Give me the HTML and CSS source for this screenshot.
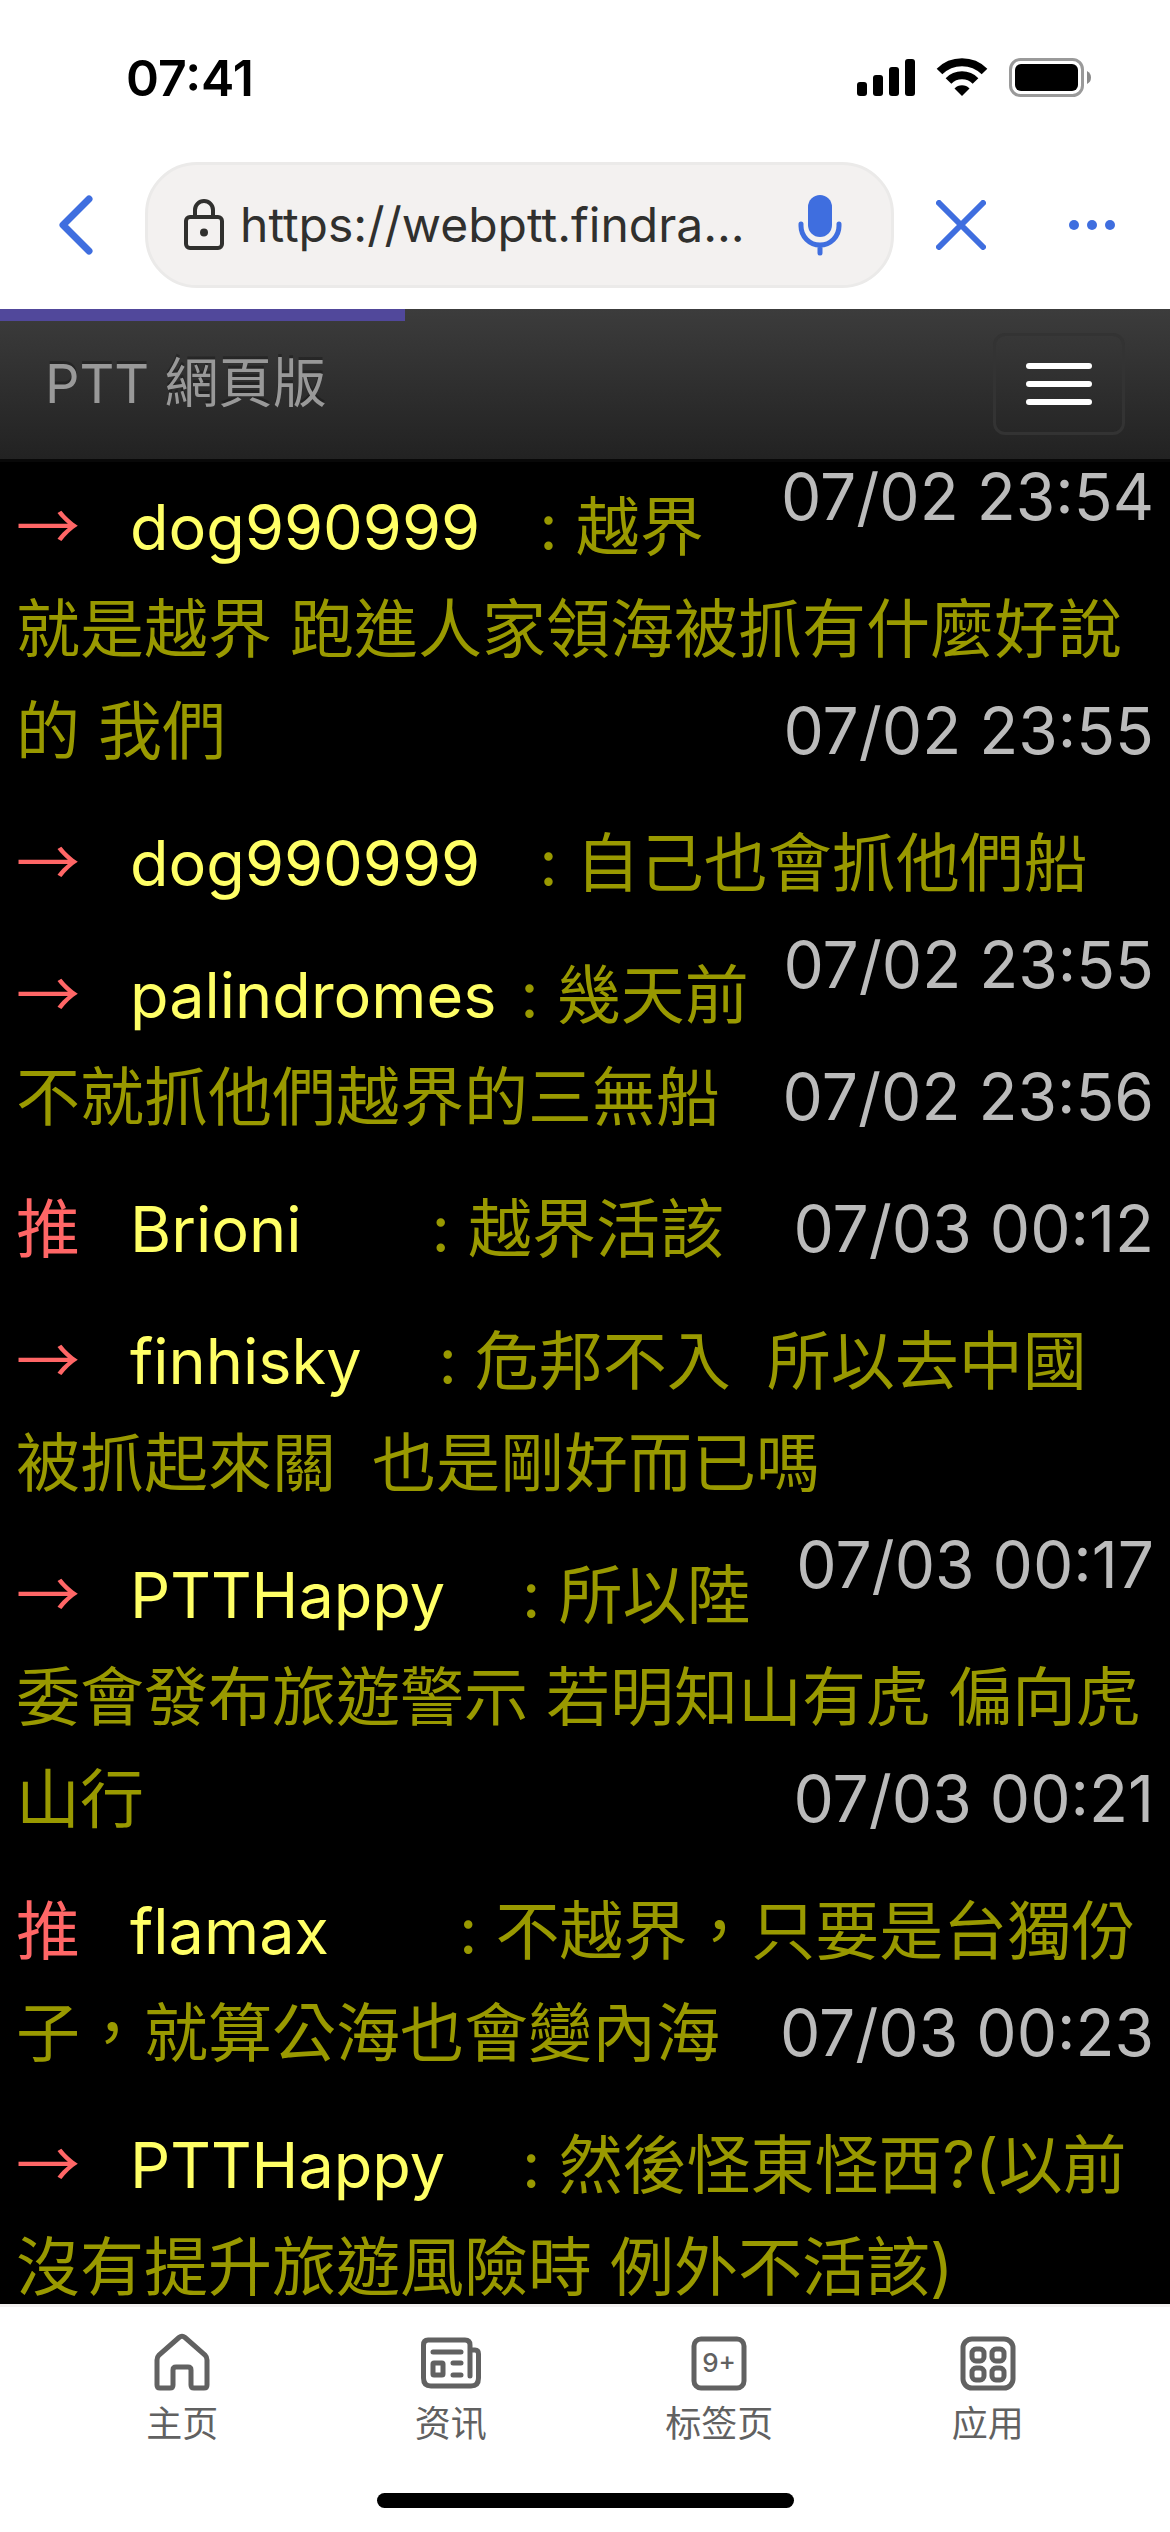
FILE: index.html
```html
<!DOCTYPE html>
<html lang="zh-Hant">
<head>
<meta charset="utf-8">
<meta name="viewport" content="width=device-width, initial-scale=1">
<title>PTT 網頁版</title>
<link rel="stylesheet" href="styles.css">
</head>
<body>
<header class="status">
  <time class="clock">07:41</time>
  <div class="status-icons">
    <svg width="60" height="40" viewBox="0 0 60 40" aria-hidden="true"><rect x="1" y="24" width="10" height="14" rx="3"/><rect x="17" y="17" width="10" height="21" rx="3"/><rect x="33" y="9" width="10" height="29" rx="3"/><rect x="49" y="1" width="10" height="37" rx="3"/></svg>
    <svg width="52" height="40" viewBox="0 0 52 40" aria-hidden="true"><g fill="none" stroke="#000" stroke-width="8"><path d="M3.500 13.500 A32 32 0 0 1 48.500 13.500"/><path d="M12.500 23 A19 19 0 0 1 39.500 23"/></g><path d="M18.500 30.500 A10.500 10.500 0 0 1 33.500 30.500 L26 38 Z"/></svg>
    <svg width="84" height="40" viewBox="0 0 84 40" aria-hidden="true"><rect x="2.500" y="1.500" width="72" height="36" rx="10" fill="none" stroke="#9a9a9a" stroke-width="3"/><rect x="7" y="6" width="63" height="27" rx="6"/><path d="M79 13 Q83 15 83 19.500 Q83 24 79 26 Z" fill="#8a8a8a"/></svg>
  </div>
</header>

<form class="toolbar">
  <button class="tool back" type="button" aria-label="返回"><svg width="36" height="60" viewBox="0 0 36 60"><path d="M31 4 L5 30 L31 56"/></svg></button>
  <div class="address">
    <svg class="lock" width="42" height="52" viewBox="0 0 42 52" aria-hidden="true"><rect x="3" y="18" width="36" height="31" rx="4"/><path d="M12 18 V11 A9 9 0 0 1 30 11 V18"/><circle cx="21" cy="33.500" r="2"/></svg>
    <input class="url" type="text" aria-label="网址" value="https://webptt.findra..." readonly>
    <button class="tool" type="button" aria-label="语音"><svg width="44" height="62" viewBox="0 0 44 62"><rect class="solid" x="10" y="1" width="24" height="42" rx="12"/><path class="thin" d="M3 30 V32 A19 19 0 0 0 41 32 V30 M22 51 V59"/></svg></button>
  </div>
  <button class="tool stop" type="button" aria-label="停止"><svg width="50" height="50" viewBox="0 0 50 50"><path class="mid" d="M3 3 L47 47 M47 3 L3 47"/></svg></button>
  <button class="tool more" type="button" aria-label="更多"><svg width="48" height="12" viewBox="0 0 48 12"><g class="solid"><circle cx="6" cy="6" r="5"/><circle cx="24" cy="6" r="5"/><circle cx="42" cy="6" r="5"/></g></svg></button>
</form>

<nav class="navbar">
  <div class="progress"></div>
  <a class="brand" href="#">PTT 網頁版</a>
  <button class="toggle" type="button" aria-label="選單"><span></span><span></span><span></span></button>
</nav>

<main class="page">
  <ol class="thread">
    <li><time class="date">07/02 23:54</time></li>
    <li class="push"><span class="tag">→</span><span class="user">dog990999&nbsp;&nbsp;&nbsp;</span>: 越界<br>就是越界 跑進人家領海被抓有什麼好說<br>的 我們<time class="date">07/02 23:55</time></li>
    <li class="push"><span class="tag">→</span><span class="user">dog990999&nbsp;&nbsp;&nbsp;</span>: 自己也會抓他們船<time class="date">07/02 23:55</time></li>
    <li class="push"><span class="tag">→</span><span class="user">palindromes&nbsp;</span>: 幾天前<br>不就抓他們越界的三無船<time class="date">07/02 23:56</time></li>
    <li class="push"><span class="tag">推</span><span class="user">Brioni&nbsp;&nbsp;&nbsp;&nbsp;&nbsp;&nbsp;&nbsp;</span>: 越界活該<time class="date">07/03 00:12</time></li>
    <li class="push"><span class="tag">→</span><span class="user">finhisky&nbsp;&nbsp;&nbsp;&nbsp;</span>: 危邦不入&nbsp; 所以去中國<br>被抓起來關&nbsp; 也是剛好而已嗎<time class="date">07/03 00:17</time></li>
    <li class="push"><span class="tag">→</span><span class="user">PTTHappy&nbsp;&nbsp;&nbsp;&nbsp;</span>: 所以陸<br>委會發布旅遊警示 若明知山有虎 偏向虎<br>山行<time class="date">07/03 00:21</time></li>
    <li class="push"><span class="tag">推</span><span class="user">flamax&nbsp;&nbsp;&nbsp;&nbsp;&nbsp;&nbsp;&nbsp;</span>: 不越界，只要是台獨份<br>子，就算公海也會變內海<time class="date">07/03 00:23</time></li>
    <li class="push"><span class="tag">→</span><span class="user">PTTHappy&nbsp;&nbsp;&nbsp;&nbsp;</span>: 然後怪東怪西?(以前<br>沒有提升旅遊風險時 例外不活該)</li>
  </ol>
</main>

<footer class="dock" lang="zh-Hans">
  <nav class="tabs">
    <a class="tab" href="#"><svg width="60" height="60" viewBox="0 0 60 60"><path d="M27 5.500 Q30 3 33 5.500 L53 23 Q55 25 55 28 V53 Q55 56 52 56 H42 Q39 56 39 53 V38 Q39 35 36 35 H24 Q21 35 21 38 V53 Q21 56 18 56 H8 Q5 56 5 53 V28 Q5 25 7 23 Z"/></svg>主页</a>
    <a class="tab" href="#"><svg width="60" height="60" viewBox="0 0 60 60"><path d="M49 44 V13 Q49 8 44 8 H7 Q2.500 8 2.500 13 V46 Q2.500 54 10 54 H50 Q57.500 54 57.500 46 V22 Q57.500 18 54 18 H50 M12 20 H40 M32 31 H40 M32 43 H40"/><rect x="12" y="31" width="10" height="12" rx="1"/></svg>资讯</a>
    <a class="tab" href="#"><svg width="60" height="60" viewBox="0 0 60 60"><rect x="5" y="7" width="50" height="49" rx="7"/><text class="count" x="30" y="40" text-anchor="middle">9+</text></svg>标签页</a>
    <a class="tab" href="#"><svg width="60" height="60" viewBox="0 0 60 60"><rect x="5" y="7" width="50" height="49" rx="9"/><rect x="14" y="17" width="12" height="12" rx="4"/><rect x="34" y="17" width="12" height="12" rx="4"/><rect x="14" y="36" width="12" height="12" rx="4"/><rect x="34" y="36" width="12" height="12" rx="4"/></svg>应用</a>
  </nav>
  <div class="home-bar"></div>
</footer>
</body>
</html>
```
FILE: styles.css
```css
* { box-sizing: border-box; }

body {
  margin: 0;
  height: 100vh;
  display: flex;
  flex-direction: column;
  background: #fff;
  font-family: Inter, "Noto Sans CJK TC", sans-serif;
}

button {
  margin: 0;
  padding: 0;
  border: 0;
  background: none;
}

svg { display: block; }

/* Status bar */
.status {
  flex: none;
  display: flex;
  align-items: center;
  justify-content: space-between;
  height: 162px;
  padding: 0 78px 6px 126px;
}

.clock {
  font-size: 50px;
  font-weight: 600;
}

.status-icons {
  display: flex;
  gap: 20px;
}

/* Browser toolbar */
.toolbar {
  flex: none;
  display: flex;
  align-items: center;
  height: 147px;
  margin: 0;
  padding: 0 54px 21px 58px;
}

.tool svg {
  fill: none;
  stroke: #3f6edf;
  stroke-width: 7px;
  stroke-linecap: round;
  stroke-linejoin: round;
}

.tool .thin { stroke-width: 5px; }
.tool .mid { stroke-width: 6px; }

.tool .solid {
  fill: #3f6edf;
  stroke: none;
}

.address {
  flex: 1;
  min-width: 0;
  display: flex;
  align-items: center;
  gap: 15px;
  height: 126px;
  margin: 0 42px 0 51px;
  padding: 0 49px 0 35px;
  border: 3px solid #ebeae9;
  border-radius: 52px;
  background: #f3f1f0;
}

.lock {
  flex: none;
  fill: none;
  stroke: #30302e;
  stroke-width: 4px;
}

.lock circle { fill: #30302e; }

.url {
  flex: 1;
  min-width: 0;
  padding: 0;
  border: 0;
  outline: 0;
  background: none;
  color: #30302e;
  font: 48px/64px Inter, sans-serif;
}

.more { margin-left: 82px; }

/* Site header */
.navbar {
  position: relative;
  z-index: 1;
  flex: none;
  display: flex;
  align-items: center;
  justify-content: space-between;
  height: 153px;
  padding: 0 45px;
  border-bottom: 3px solid #080808;
  background: linear-gradient(#3c3c3c, #222);
}

.progress {
  position: absolute;
  top: 0;
  left: 0;
  width: 34.6%;
  height: 12px;
  background: #51489b;
}

.brand {
  padding-bottom: 10px;
  color: #999;
  font-size: 54px;
  text-decoration: none;
  text-shadow: 0 -3px 0 rgba(0, 0, 0, .25);
}

.toggle {
  display: flex;
  flex-direction: column;
  align-items: center;
  justify-content: center;
  gap: 12px;
  width: 132px;
  height: 102px;
  border: 3px solid #333;
  border-radius: 12px;
}

.toggle span {
  width: 66px;
  height: 6px;
  border-radius: 3px;
  background: #fff;
}

/* Comment thread */
.page {
  flex: 1;
  min-height: 0;
  margin-top: -16px;
  overflow: hidden;
  background: #000;
}

.thread {
  margin: 0;
  padding: 0 16px;
  list-style: none;
  color: #990;
  font-size: 64px;
  line-height: 102px;
}

.push { padding-top: 30px; }

.tag {
  display: inline-block;
  width: 114px;
  color: #f66;
  font-family: "Noto Sans CJK TC", sans-serif;
  line-height: 1;
}

.user {
  margin-right: 6px;
  color: #ff6;
  font-size: 63px;
}

.date {
  float: right;
  color: #bbb;
}

/* Bottom bar */
.dock {
  flex: none;
  border-top: 3px solid #f3f1f0;
  background: #fff;
}

.tabs {
  display: flex;
  height: 186px;
  padding: 25px 48px 0;
}

.tab {
  flex: 1;
  display: flex;
  flex-direction: column;
  align-items: center;
  gap: 3px;
  color: #616161;
  font: 36px/52px "Noto Sans CJK SC", sans-serif;
  text-decoration: none;
}

.tab svg {
  fill: none;
  stroke: #616161;
  stroke-width: 5px;
  stroke-linecap: round;
}

.tab .count {
  fill: #616161;
  stroke: none;
  font: 500 26px Inter, sans-serif;
}

.home-bar {
  width: 417px;
  height: 15px;
  margin: 0 auto 24px;
  border-radius: 8px;
  background: #000;
}
```
